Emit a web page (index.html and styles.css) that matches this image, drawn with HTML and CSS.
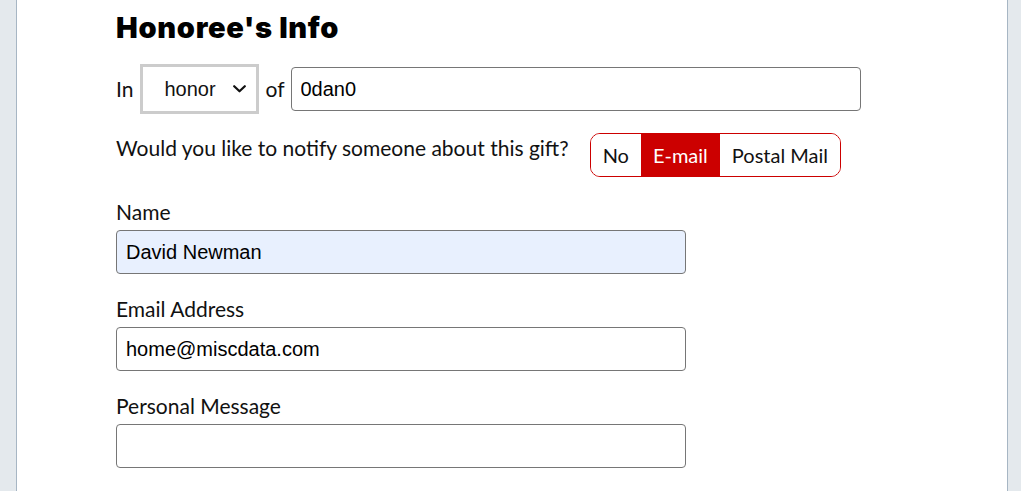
FILE: index.html
```html
<!DOCTYPE html>
<html lang="en">
<head>
<meta charset="utf-8">
<title>Honoree's Info</title>
<link rel="stylesheet" href="styles.css">
</head>
<body>
<div class="page">
  <main class="card">
    <h2 class="title">Honoree's Info</h2>

    <div class="tribute-row">
      <span class="word">In</span>
      <span class="select-wrap">
        <select class="select">
          <option>honor</option>
          <option>memory</option>
        </select>
        <svg class="chevron" width="13" height="8" viewBox="0 0 13 8" aria-hidden="true">
          <path d="M1.2 1.2 L6.5 6.3 L11.8 1.2" fill="none" stroke="#111" stroke-width="2.2" stroke-linecap="round" stroke-linejoin="round"/>
        </svg>
      </span>
      <span class="word">of</span>
      <input class="field" type="text" value="0dan0">
    </div>

    <div class="notify-row">
      <span class="question">Would you like to notify someone about this gift?</span>
      <div class="toggle">
        <span class="opt">No</span>
        <span class="opt active">E-mail</span>
        <span class="opt">Postal Mail</span>
      </div>
    </div>

    <div class="group">
      <label class="label">Name</label>
      <input class="field autofill" type="text" value="David Newman">
    </div>
    <div class="group">
      <label class="label">Email Address</label>
      <input class="field" type="text" value="home@miscdata.com">
    </div>
    <div class="group">
      <label class="label">Personal Message</label>
      <input class="field" type="text" value="">
    </div>
  </main>
</div>
</body>
</html>
```

FILE: styles.css
```css
html, body {
  margin: 0;
  padding: 0;
}

body {
  background: #e4e9ed;
  font-family: "Lato", "Liberation Sans", sans-serif;
  color: #111;
}

.page {
  display: flex;
  min-height: 100vh;
  padding: 0 13px 0 16px;
}

.card {
  flex: 1;
  background: #fff;
  border-left: 1px solid #a7b6c4;
  border-right: 1px solid #a7b6c4;
  padding: 10px 0 0 99px;
}

.title {
  margin: 0;
  font-family: "Inter", "Lato", sans-serif;
  font-weight: 900;
  font-size: 29px;
  line-height: 36px;
  letter-spacing: 0.7px;
  color: #000;
}

.tribute-row {
  display: flex;
  align-items: center;
  gap: 6px;
  margin-top: 18px;
}

.word {
  font-size: 21px;
  line-height: 24px;
}

.select-wrap {
  position: relative;
  display: inline-flex;
  margin-left: 1px;
}

.select {
  appearance: none;
  -webkit-appearance: none;
  box-sizing: border-box;
  width: 119px;
  height: 50px;
  border: 3px solid #cccccc;
  border-radius: 0;
  background: #fff;
  padding: 0 0 0 21px;
  margin: 0;
  font-family: "Liberation Sans", Arial, sans-serif;
  font-size: 20px;
  color: #111;
}

.chevron {
  position: absolute;
  right: 13px;
  top: 21px;
  pointer-events: none;
}

.field {
  box-sizing: border-box;
  width: 570px;
  height: 44px;
  border: 1px solid #767676;
  border-radius: 4px;
  padding: 0 9px;
  margin: 0;
  background: #fff;
  font-family: "Liberation Sans", Arial, sans-serif;
  font-size: 20px;
  color: #000;
}

.field.autofill {
  background: #e8f0fe;
}

.notify-row {
  display: flex;
  align-items: flex-start;
  gap: 21px;
  margin-top: 19px;
}

.question {
  font-size: 21px;
  line-height: 24px;
  padding-top: 3px;
}

.toggle {
  display: flex;
  border: 1px solid #cc0000;
  border-radius: 10px;
  overflow: hidden;
}

.opt {
  height: 42px;
  line-height: 42px;
  padding: 0 12px;
  font-size: 20px;
  color: #111;
  background: #fff;
}

.opt.active {
  background: #cc0000;
  color: #fff;
}

.group {
  display: flex;
  flex-direction: column;
  align-items: flex-start;
  gap: 6px;
  margin-top: 23px;
}

.label {
  font-size: 21px;
  line-height: 24px;
}
```
